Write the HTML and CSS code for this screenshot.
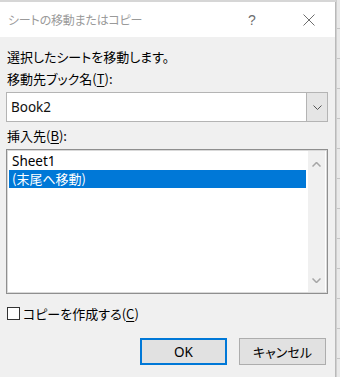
FILE: index.html
```html
<!DOCTYPE html>
<html lang="ja">
<head>
<meta charset="utf-8">
<link rel="stylesheet" href="styles.css">
</head>
<body>
<div class="screen">
  <div class="dialog">
    <div class="titlebar">
      <span class="title">シートの移動またはコピー</span>
      <span class="help">?</span>
      <span class="close"><svg width="12" height="12" viewBox="0 0 12 12"><path d="M0.5 0.5 L11.5 11.5 M11.5 0.5 L0.5 11.5" stroke="#6e6e6e" stroke-width="1" fill="none"/></svg></span>
    </div>
    <div class="body">
      <div class="msg">選択したシートを移動します。</div>
      <div class="label label-first">移動先ブック名(<u>T</u>):</div>
      <div class="combo">
        <span class="combo-value">Book2</span>
        <span class="combo-drop"><svg width="9" height="5" viewBox="0 0 9 5"><path d="M0.5 0.5 L4.5 4.5 L8.5 0.5" stroke="#555" stroke-width="1" fill="none"/></svg></span>
      </div>
      <div class="label label-second">挿入先(<u>B</u>):</div>
      <div class="list">
        <div class="items">
          <div class="item">Sheet1</div>
          <div class="item selected">(末尾へ移動)</div>
        </div>
        <div class="scroll">
          <svg width="9" height="5" viewBox="0 0 9 5"><path d="M0.5 4.5 L4.5 0.5 L8.5 4.5" stroke="#a6a6a6" stroke-width="1.5" fill="none"/></svg>
          <svg width="9" height="5" viewBox="0 0 9 5"><path d="M0.5 0.5 L4.5 4.5 L8.5 0.5" stroke="#a6a6a6" stroke-width="1.5" fill="none"/></svg>
        </div>
      </div>
      <div class="check"><span class="box"></span><span>コピーを作成する(<u>C</u>)</span></div>
      <div class="buttons">
        <button class="btn btn-default">OK</button>
        <button class="btn">キャンセル</button>
      </div>
    </div>
  </div>
  <div class="grid"></div>
</div>
</body>
</html>
```
FILE: styles.css
```css
html, body {
  margin: 0;
  padding: 0;
}
body {
  font-family: "Noto Sans CJK JP", "Noto Sans", sans-serif;
  font-size: 13px;
  color: #000;
  font-feature-settings: "palt";
}
.screen {
  width: 340px;
  height: 377px;
  display: flex;
  background: #d6d6d6;
  overflow: hidden;
}
.dialog {
  width: 335px;
  margin-top: 2px;
  display: flex;
  flex-direction: column;
  background: #f0f0f0;
  border-right: 1px solid #b9b9b9;
  flex: none;
}
.grid {
  flex: 1;
  background-color: #e9e9e9;
  background-image: repeating-linear-gradient(to bottom, transparent 0, transparent 28px, #c6c6c6 28px, #c6c6c6 29px, transparent 29px, transparent 30px);
  border-left: 1px solid #cfcfcf;
}
.titlebar {
  height: 35px;
  background: #fff;
  display: flex;
  align-items: center;
  padding-left: 8px;
}
.title {
  font-size: 12px;
  color: #9a9a9a;
  flex: 1;
  letter-spacing: -0.2px;
}
.help {
  font-family: "Liberation Sans", sans-serif;
  font-size: 14px;
  color: #6e6e6e;
  width: 10px;
  margin-right: 45px;
}
.close {
  width: 12px;
  height: 12px;
  margin-right: 20px;
  display: flex;
}
.body {
  padding: 11px 7px 0 6px;
  display: flex;
  flex-direction: column;
}
.msg, .label {
  line-height: 18px;
  height: 18px;
  padding-left: 1px;
}
.label-first {
  margin-top: 4px;
}
.label-second {
  margin-top: 5px;
}
.combo {
  margin-top: 4px;
  height: 30px;
  box-sizing: border-box;
  border: 1px solid #b4b4b4;
  background: #fff;
  display: flex;
  align-items: stretch;
}
.combo-value {
  flex: 1;
  font-family: "Noto Sans", sans-serif;
  font-size: 13.5px;
  line-height: 28px;
  padding-left: 4px;
  color: #111;
}
.combo-drop {
  width: 20px;
  background: #e5e5e5;
  border-left: 1px solid #b4b4b4;
  display: flex;
  align-items: center;
  justify-content: center;
}
.list {
  margin-top: 4px;
  height: 145px;
  box-sizing: border-box;
  border: 1px solid #8f8f8f;
  box-shadow: inset 0 0 0 1px #d9d9d9;
  background: #fff;
  display: flex;
  padding: 2px 2px 2px 2px;
}
.items {
  flex: 1;
  margin-right: 2px;
}
.item {
  height: 18px;
  line-height: 18px;
  padding-left: 3px;
  font-family: "Noto Sans", "Noto Sans CJK JP", sans-serif;
  font-size: 13.5px;
}
.item.selected {
  background: #0078d7;
  color: #fff;
  font-family: "Noto Sans CJK JP", sans-serif;
  font-size: 13px;
}
.scroll {
  width: 17px;
  background: #f0f0f0;
  margin: -1px 0 -1px 0;
  display: flex;
  flex-direction: column;
  justify-content: space-between;
  align-items: center;
  padding: 11px 0 9px;
}
.check {
  margin-top: 10px;
  height: 18px;
  display: flex;
  align-items: center;
  gap: 3px;
  padding-left: 1px;
}
.box {
  width: 13px;
  height: 13px;
  box-sizing: border-box;
  border: 1px solid #333;
  background: #fff;
}
.buttons {
  margin-top: 16px;
  display: flex;
  justify-content: flex-end;
  gap: 12px;
  padding-right: 2px;
}
.btn {
  width: 87px;
  height: 27px;
  box-sizing: border-box;
  background: #e1e1e1;
  border: 1px solid #adadad;
  font-family: "Noto Sans CJK JP", sans-serif;
  font-size: 13px;
  font-feature-settings: "palt";
  color: #000;
  padding: 0;
  margin: 0;
}
.btn-default {
  border: 2px solid #0078d7;
  font-family: "Noto Sans", sans-serif;
  font-size: 13.5px;
}
u {
  text-decoration: underline;
  text-underline-offset: 2px;
}
```
